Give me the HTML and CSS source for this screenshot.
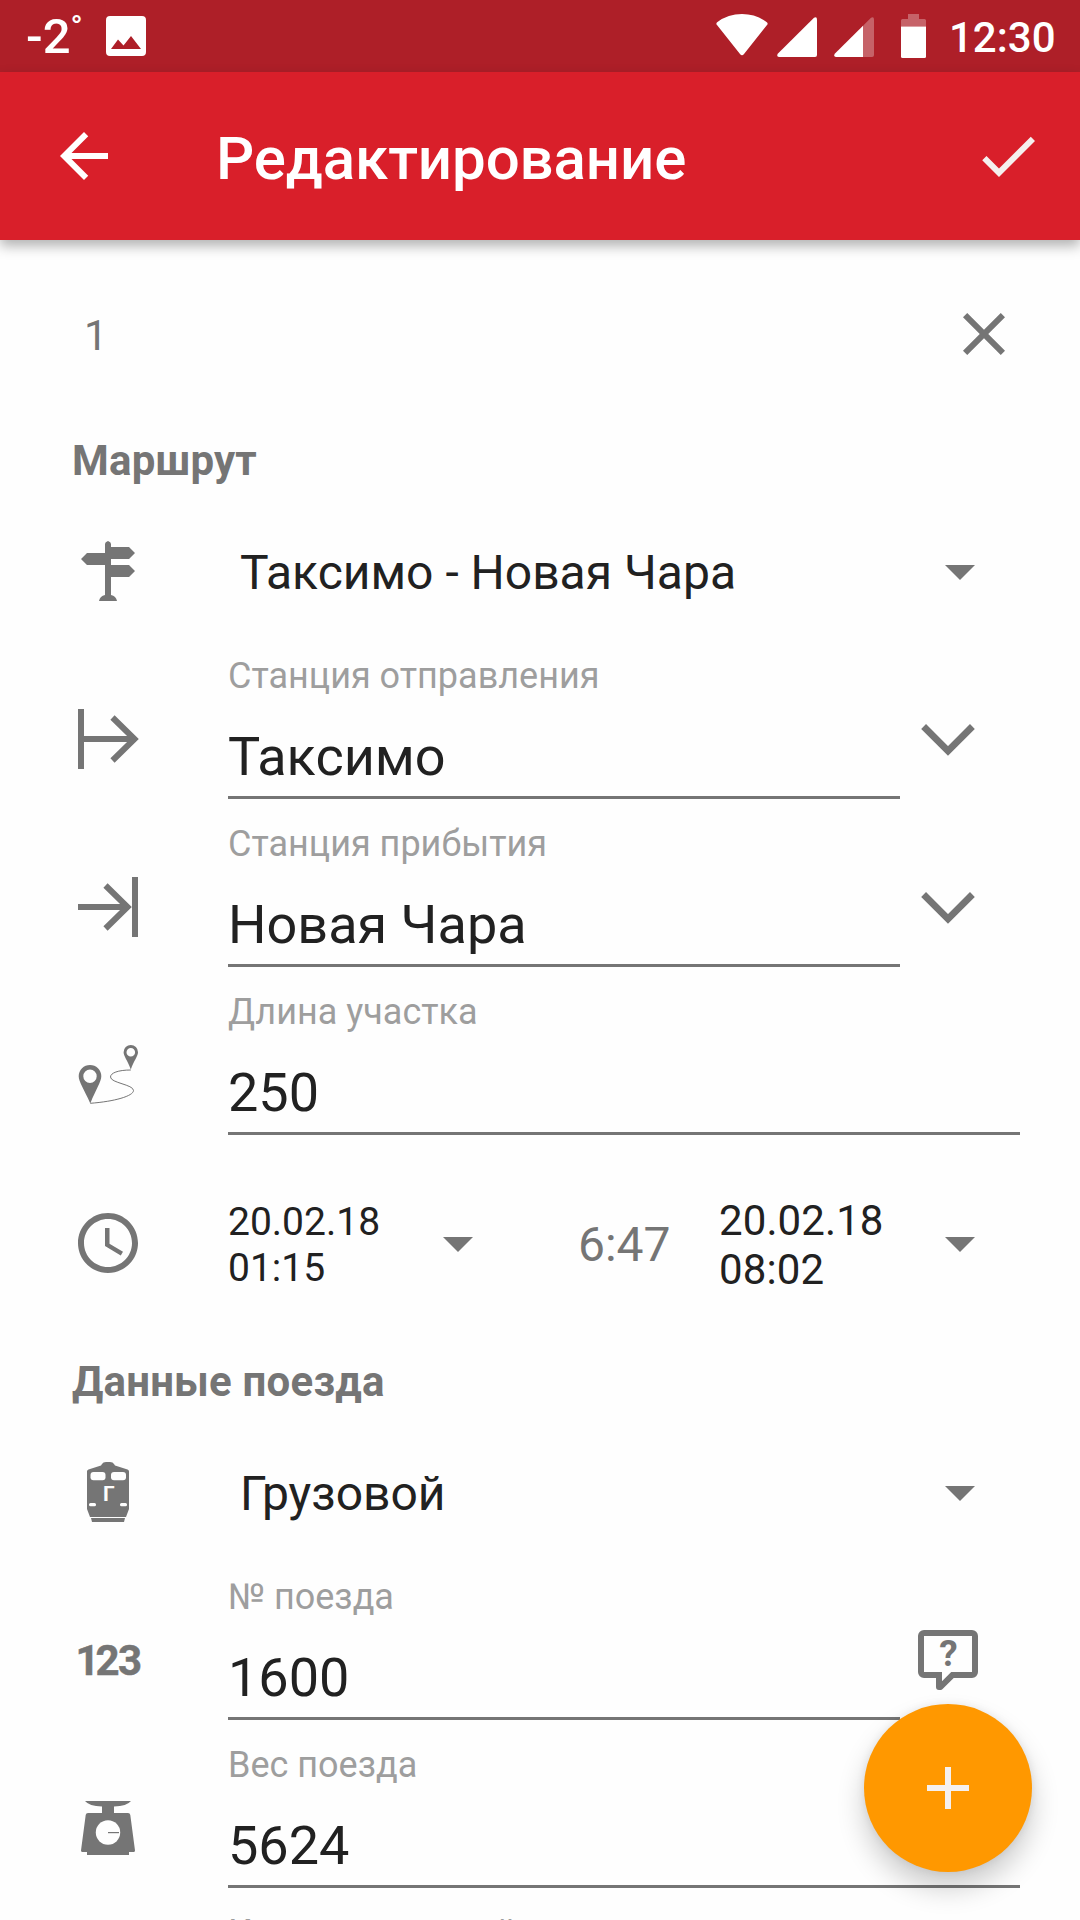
FILE: index.html
```html
<!DOCTYPE html>
<html lang="ru">
<head>
  <title>Редактирование</title>
  <meta charset="utf-8">
  <link rel="stylesheet" href="styles.css">
</head>
<body>

  <!-- Status bar -->
  <div class="status-bar">
    <span class="temperature">-2<span class="degree">°</span></span>
    <svg class="status-picture" width="40" height="40" viewBox="0 0 40 40">
      <path fill="#fff" fill-rule="evenodd" d="M4 0h32a4 4 0 0 1 4 4v32a4 4 0 0 1-4 4H4a4 4 0 0 1-4-4V4a4 4 0 0 1 4-4zM5 33h30L25 20l-7.500 9.500-5.500-6z"/>
    </svg>
    <div class="status-right">
      <svg width="52" height="42" viewBox="0 0 52 42">
        <path fill="#fff" d="M1 11Q-.5 9.500 1.500 8 12 0 26 0t24.500 8q2 1.500.5 3L28 40q-2 2.500-4 0z"/>
      </svg>
      <svg class="signal" width="40" height="40" viewBox="0 0 40 40">
        <path fill="#fff" d="M1 36.500L37 .7q3-1.500 3 1.800V38q0 2-2 2H2q-3-.5-1-3.500z"/>
      </svg>
      <svg class="signal-two" width="40" height="40" viewBox="0 0 40 40">
        <path fill="#fff" fill-opacity=".3" d="M29 8.700L37 .7q3-1.500 3 1.800V38q0 2-2 2h-9z"/>
        <path fill="#fff" d="M1 36.500L29 8.700V40H2q-3-.5-1-3.500z"/>
      </svg>
      <svg class="battery" width="25" height="44" viewBox="0 0 25 44">
        <path fill="#fff" fill-opacity=".3" d="M7 0h11v5h5.500q1.500 0 1.500 1.500V12.500H0v-6Q0 5 1.500 5H7z"/>
        <path fill="#fff" d="M0 12.500h25v30q0 1.500-1.500 1.500h-22Q0 44 0 42.500z"/>
      </svg>
      <span class="clock">12:30</span>
    </div>
  </div>

  <!-- Toolbar -->
  <div class="toolbar">
    <svg class="icon" viewBox="0 0 24 24"><path fill="#fff" d="M20 11H7.830l5.590-5.590L12 4l-8 8 8 8 1.410-1.410L7.830 13H20v-2z"/></svg>
    <h1>Редактирование</h1>
    <svg class="icon" viewBox="0 0 24 24"><path fill="#f5f0ee" d="M9 16.170L4.830 12l-1.420 1.410L9 19 21 7l-1.410-1.410z"/></svg>
  </div>

  <div class="form">
    <div class="route-head">
      <span>1</span>
      <svg class="icon" viewBox="0 0 24 24"><path d="M19 6.410L17.590 5 12 10.590 6.410 5 5 6.410 10.590 12 5 17.590 6.410 19 12 13.410 17.590 19 19 17.590 13.410 12z"/></svg>
    </div>

    <!-- Route -->
    <h2>Маршрут</h2>

    <div class="spinner-row">
      <svg class="icon" viewBox="0 0 72 72">
        <path d="M33 9q0-2 3-3 3 1 3 3v3h18l6 6-6 6H39v6h18l6 6-6 6H39v18q5 1 6 6H27q1-5 6-6V30H15l-6-6 6-6h18z"/>
      </svg>
      <span class="spinner-text">Таксимо - Новая Чара</span>
      <span class="caret"></span>
    </div>

    <div class="field-row">
      <svg class="icon" viewBox="0 0 72 72">
        <path d="M6 6h6v60H6zM12 33h50v6H12z"/>
        <path class="line" d="M40.500 14.500L62.500 36l-22 21.500"/>
      </svg>
      <div class="field">
        <label>Станция отправления</label>
        <div class="value">Таксимо</div>
      </div>
      <svg class="icon action" viewBox="0 0 72 72"><path class="line chevron" d="M11.600 23.500L36 48l24.400-24.500"/></svg>
    </div>

    <div class="field-row">
      <svg class="icon" viewBox="0 0 72 72">
        <path d="M60 6h6v60h-6zM6 33h50v6H6z"/>
        <path class="line" d="M33.500 14.500L55.500 36l-22 21.500"/>
      </svg>
      <div class="field">
        <label>Станция прибытия</label>
        <div class="value">Новая Чара</div>
      </div>
      <svg class="icon action" viewBox="0 0 72 72"><path class="line chevron" d="M11.600 23.500L36 48l24.400-24.500"/></svg>
    </div>

    <div class="field-row">
      <svg class="icon" viewBox="0 0 72 72">
        <path fill-rule="evenodd" d="M18 26a11.300 11.300 0 0 1 11.300 11.300C29.300 43 24 50 18.300 64.500 12 50 6.700 43 6.700 37.300A11.300 11.300 0 0 1 18 26zm0 4.500a6.700 6.700 0 1 0 0 13.400 6.700 6.700 0 0 0 0-13.400z"/>
        <path fill-rule="evenodd" d="M58.800 6a7.200 7.200 0 0 1 7.200 7.200c0 4-4 8-7.200 17.300-3.200-9.300-7.200-13.300-7.200-17.300A7.200 7.200 0 0 1 58.800 6zm0 2.900a4.300 4.300 0 1 0 0 8.600 4.300 4.300 0 0 0 0-8.600z"/>
        <path class="line thin" d="M58.800 31C46 31 38.500 34 38.500 38c0 6 23 7.500 23 13.500 0 5.500-19 11-43.200 12.800"/>
      </svg>
      <div class="field wide">
        <label>Длина участка</label>
        <div class="value">250</div>
      </div>
    </div>

    <div class="time-row">
      <svg class="icon" viewBox="0 0 24 24">
        <path d="M12 2C6.470 2 2 6.480 2 12s4.470 10 10 10 10-4.480 10-10S17.520 2 12 2zm0 18c-4.420 0-8-3.580-8-8s3.580-8 8-8 8 3.580 8 8-3.580 8-8 8zM12.500 7H11v6l5.250 3.150.75-1.230-4.500-2.670z"/>
      </svg>
      <div class="date start">20.02.18<br>01:15</div>
      <span class="caret"></span>
      <span class="duration">6:47</span>
      <div class="date">20.02.18<br>08:02</div>
      <span class="caret"></span>
    </div>

    <!-- Train data -->
    <h2>Данные поезда</h2>

    <div class="spinner-row">
      <svg class="icon" viewBox="0 0 72 72">
        <path d="M30 8q1-2 4-2h4q3 0 4 2l1 1.500 12.500 4q1.500.5 1.500 2V53l-3 8H18l-3-8V15.500q0-1.500 1.500-2L29 9.500z"/>
        <path d="M19 62h34L52 66H20z"/>
        <g fill="#fefefe">
          <rect x="18.500" y="16" width="15" height="8.300" rx="3"/>
          <rect x="39" y="16" width="15" height="8.300" rx="3"/>
          <rect x="17" y="47" width="7" height="3.300" rx="1.500"/>
          <rect x="48" y="47" width="7" height="3.300" rx="1.500"/>
          <text class="train-letter" x="31" y="45">Г</text>
        </g>
      </svg>
      <span class="spinner-text">Грузовой</span>
      <span class="caret"></span>
    </div>

    <div class="field-row">
      <svg class="icon" viewBox="0 0 72 72">
        <text class="numbers" x="3.500 23.500 46" y="51">123</text>
      </svg>
      <div class="field">
        <label>№ поезда</label>
        <div class="value">1600</div>
      </div>
      <svg class="icon action" viewBox="0 0 72 72">
        <path fill-rule="evenodd" d="M12 6h48a6 6 0 0 1 6 6v36a6 6 0 0 1-6 6H41.700L30.600 65.100Q29.800 66 28.500 66H27a3 3 0 0 1-3-3v-9H12a6 6 0 0 1-6-6V12a6 6 0 0 1 6-6zm0 6v36h18v9.200L39.200 48H60V12z"/>
        <text class="question" x="36.500" y="42">?</text>
      </svg>
    </div>

    <div class="field-row">
      <svg class="icon" viewBox="0 0 72 72">
        <path d="M13 9h46q-4 5-17 5.500V21h14q2 0 2.300 2L63 58.500q0 1.500-1.500 1.500H57v3H15v-3h-4.500Q9 60 9 58.500L13.700 23q.3-2 2.300-2h14v-6.500Q17 14 13 9z"/>
        <circle cx="36" cy="40.500" r="12.200" fill="#fefefe"/>
        <path d="M36 40h11v1.200H36z"/>
      </svg>
      <div class="field wide">
        <label>Вес поезда</label>
        <div class="value">5624</div>
      </div>
    </div>

    <div class="field-row">
      <span></span>
      <div class="field wide">
        <label>Количество осей</label>
      </div>
    </div>
  </div>

  <button class="fab">
    <svg class="icon" viewBox="0 0 24 24"><path fill="#f5f0ee" d="M19 13h-6v6h-2v-6H5v-2h6V5h2v6h6v2z"/></svg>
  </button>

</body>
</html>
```

FILE: styles.css
```css
/* General Page Styling */
* {
  box-sizing: border-box;
}

body {
  font-family: Roboto, sans-serif;
  background-color: #fefefe;
  color: #212121;
  margin: 0;
  height: 1920px;
  overflow: hidden;
}

h1, h2 {
  margin: 0;
}

.icon {
  width: 72px;
  height: 72px;
  flex: none;
  display: block;
  fill: #757575;
}

.line {
  fill: none;
  stroke: #757575;
  stroke-width: 6;
}

.chevron {
  stroke-width: 6.8;
}

.thin {
  stroke-width: 1;
}

/* Status Bar */
.status-bar {
  display: flex;
  align-items: flex-start;
  height: 72px;
  padding: 0 24px 0 26px;
  background-color: #ae1f28;
  color: #fff;
}

.temperature {
  width: 80px;
  font-size: 49px;
  font-weight: 500;
  line-height: 73px;
  white-space: nowrap;
}

.degree {
  font-size: 32px;
  line-height: 0;
  vertical-align: 15px;
}

.status-picture {
  margin-top: 16px;
}

.status-right {
  display: flex;
  margin-left: auto;
  padding-top: 14px;
}

.signal {
  margin: 3px 0 0 9px;
}

.signal-two {
  margin: 3px 0 0 17px;
}

.battery {
  margin-left: 27px;
}

.clock {
  width: 107px;
  margin-left: 23px;
  font-size: 42px;
  font-weight: 500;
  line-height: 47px;
}

/* Toolbar */
.toolbar {
  position: relative;
  display: flex;
  align-items: center;
  height: 168px;
  padding: 0 36px 0 48px;
  background-color: #d91f2a;
  color: #fff;
  box-shadow: 0 6px 12px rgba(0, 0, 0, 0.3);
}

.toolbar h1 {
  flex: 1;
  margin-left: 96px;
  padding-top: 5px;
  font-size: 60px;
  font-weight: 500;
  letter-spacing: -0.1px;
}

/* Form */
.form {
  padding: 58px 60px 0 72px;
}

.route-head {
  display: flex;
  justify-content: space-between;
  align-items: center;
  height: 72px;
  padding-left: 12px;
  font-size: 42px;
  color: #757575;
}

.route-head span {
  padding-top: 2px;
}

h2 {
  font-size: 42px;
  font-weight: 700;
  line-height: 50px;
  letter-spacing: 0.2px;
  color: #757575;
}

.route-head + h2 {
  margin-top: 66px;
}

.caret {
  border: 15px solid transparent;
  border-top-color: #757575;
  border-bottom: 0;
  width: 0;
}

/* Dropdown rows */
.spinner-row {
  display: grid;
  grid-template-columns: 156px 1fr 30px;
  align-items: center;
  padding: 49px 45px 33px 0;
}

.spinner-row .caret {
  margin-top: 2px;
}

.spinner-text {
  padding: 3px 0 0 12px;
  font-size: 48px;
}

/* Text fields */
.field-row {
  display: grid;
  grid-template-columns: 156px 672px 1fr;
  height: 168px;
}

.field-row .icon {
  margin-top: 63px;
}

.field-row .action {
  margin-left: 12px;
}

.field {
  padding-top: 15px;
}

.wide {
  grid-column: 2 / 4;
}

.field label {
  display: block;
  font-size: 36px;
  line-height: 42px;
  color: #9e9e9e;
}

.value {
  margin-top: 28px;
  padding-bottom: 7px;
  font-size: 54px;
  line-height: 64px;
  border-bottom: 3px solid #757575;
}

/* Time */
.time-row {
  display: grid;
  grid-template-columns: 156px 215px 135px 141px 226px 30px;
  align-items: center;
  padding: 52px 0 63px;
}

.time-row .icon {
  margin-bottom: 4px;
}

.time-row .caret,
.duration {
  margin-bottom: 2px;
}

.date {
  font-size: 42px;
  line-height: 49px;
  letter-spacing: 0.1px;
}

.date.start {
  font-size: 39px;
  line-height: 46px;
  letter-spacing: 0;
}

.duration {
  font-size: 48px;
  color: #757575;
}

/* Letters inside the icons */
.train-letter {
  font-size: 21px;
  font-weight: 700;
}

.numbers {
  font-size: 42px;
  font-weight: 700;
  stroke: #757575;
  stroke-width: 0.5;
}

.question {
  font-size: 37px;
  font-weight: 700;
  text-anchor: middle;
}

/* Add Button */
.fab {
  position: absolute;
  top: 1704px;
  left: 864px;
  display: flex;
  align-items: center;
  justify-content: center;
  width: 168px;
  height: 168px;
  border: none;
  border-radius: 50%;
  background-color: #ff9800;
  box-shadow: 0 16px 28px rgba(0, 0, 0, 0.2), 0 0 8px rgba(0, 0, 0, 0.08);
}
```
